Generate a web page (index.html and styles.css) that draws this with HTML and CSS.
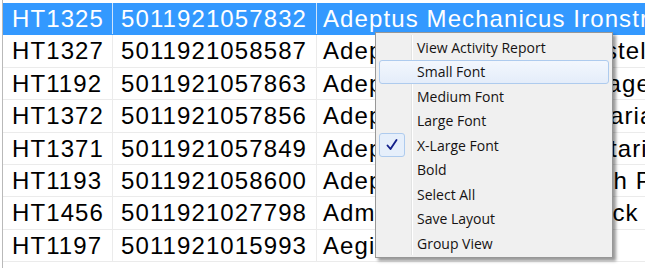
FILE: index.html
```html
<!DOCTYPE html>
<html>
<head>
<meta charset="utf-8">
<link rel="stylesheet" href="styles.css">
</head>
<body>
<div class="grid">
  <div class="row selected"><div class="cell c1">HT1325</div><div class="cell c2">5011921057832</div><div class="cell c3">Adeptus Mechanicus Ironstrider</div></div>
  <div class="row"><div class="cell c1">HT1327</div><div class="cell c2">5011921058587</div><div class="cell c3">Adeptus Mechanicus Kastelan Robots</div></div>
  <div class="row"><div class="cell c1">HT1192</div><div class="cell c2">5011921057863</div><div class="cell c3">Adeptus Mechanicus Onager Dunecrawler</div></div>
  <div class="row"><div class="cell c1">HT1372</div><div class="cell c2">5011921057856</div><div class="cell c3">Adeptus Mechanicus Sicarian Ruststalkers</div></div>
  <div class="row"><div class="cell c1">HT1371</div><div class="cell c2">5011921057849</div><div class="cell c3">Adeptus Mechanicus Skitarii Rangers</div></div>
  <div class="row"><div class="cell c1">HT1193</div><div class="cell c2">5011921058600</div><div class="cell c3">Adeptus Mechanicus Tech Priest Dominus</div></div>
  <div class="row"><div class="cell c1">HT1456</div><div class="cell c2">5011921027798</div><div class="cell c3">Admech Starter Paint Pack</div></div>
  <div class="row"><div class="cell c1">HT1197</div><div class="cell c2">5011921015993</div><div class="cell c3">Aegis Defence Line</div></div>
</div>

<div class="menu">
  <div class="gutter-line"></div>
  <div class="item"><span class="mark"></span><span class="label">View Activity Report</span></div>
  <div class="item hover"><span class="mark"></span><span class="label">Small Font</span></div>
  <div class="item"><span class="mark"></span><span class="label">Medium Font</span></div>
  <div class="item"><span class="mark"></span><span class="label">Large Font</span></div>
  <div class="item"><span class="mark checked"><svg width="14" height="14" viewBox="0 0 14 14"><path d="M2.5 7.5 L5.5 11 L11.5 2" fill="none" stroke="#14208a" stroke-width="1.9" stroke-linecap="round" stroke-linejoin="round"/></svg></span><span class="label">X-Large Font</span></div>
  <div class="item"><span class="mark"></span><span class="label">Bold</span></div>
  <div class="item"><span class="mark"></span><span class="label">Select All</span></div>
  <div class="item"><span class="mark"></span><span class="label">Save Layout</span></div>
  <div class="item"><span class="mark"></span><span class="label">Group View</span></div>
</div>
</body>
</html>
```

FILE: styles.css
```css
html, body {
  margin: 0;
  padding: 0;
  background: #ffffff;
  overflow: hidden;
}

body {
  width: 645px;
  height: 268px;
  position: relative;
}

.grid {
  margin-left: 2px;
  padding-top: 3px;
  border-left: 1px solid #b9b9b9;
  height: 265px;
  font-family: "Liberation Sans", Arial, sans-serif;
  font-size: 24px;
  letter-spacing: 1.1px;
  color: #000;
}

.row {
  display: grid;
  grid-template-columns: 110px 204px 1fr;
  height: 32.4px;
  box-sizing: border-box;
  border-bottom: 1px solid #ebebeb;
  line-height: 31.4px;
  white-space: nowrap;
  overflow: hidden;
}

.cell {
  box-sizing: border-box;
  overflow: hidden;
}

.c1 {
  padding-left: 9px;
  border-right: 1px solid #ebebeb;
}

.c2 {
  padding-left: 8px;
  border-right: 1px solid #ebebeb;
}

.c3 {
  padding-left: 6px;
}

.row.selected {
  background: #3399ff;
  color: #ffffff;
  border-bottom-color: #3399ff;
}

.row.selected .c1,
.row.selected .c2 {
  border-right-color: #cfe4fb;
}

.menu {
  position: absolute;
  left: 375px;
  top: 32px;
  width: 238px;
  height: 226px;
  box-sizing: border-box;
  background: #f0f0f0;
  border: 1px solid #979797;
  box-shadow: 3px 3px 3px rgba(0, 0, 0, 0.4);
  padding: 2px 3px;
  display: flex;
  flex-direction: column;
  font-family: "Open Sans", "Noto Sans", sans-serif;
  font-size: 14px;
  color: #161313;
}

.gutter-line {
  position: absolute;
  left: 35px;
  top: 2px;
  bottom: 2px;
  width: 1px;
  background: #e2e3e3;
  border-right: 1px solid #ffffff;
}

.item {
  height: 24.5px;
  box-sizing: border-box;
  display: flex;
  align-items: center;
  border: 1px solid transparent;
  border-radius: 3px;
  position: relative;
}

.item.hover {
  border-color: #aecbee;
  background: linear-gradient(#f3f7fd, #e4edfa);
}

.mark {
  width: 26px;
  height: 24px;
  margin-left: -1px;
  box-sizing: border-box;
  display: flex;
  align-items: center;
  justify-content: center;
  flex: none;
}

.mark.checked {
  border: 1px solid #aecbee;
  border-radius: 3px;
  background: #e6effb;
}

.label {
  margin-left: 12px;
  white-space: nowrap;
}
```
